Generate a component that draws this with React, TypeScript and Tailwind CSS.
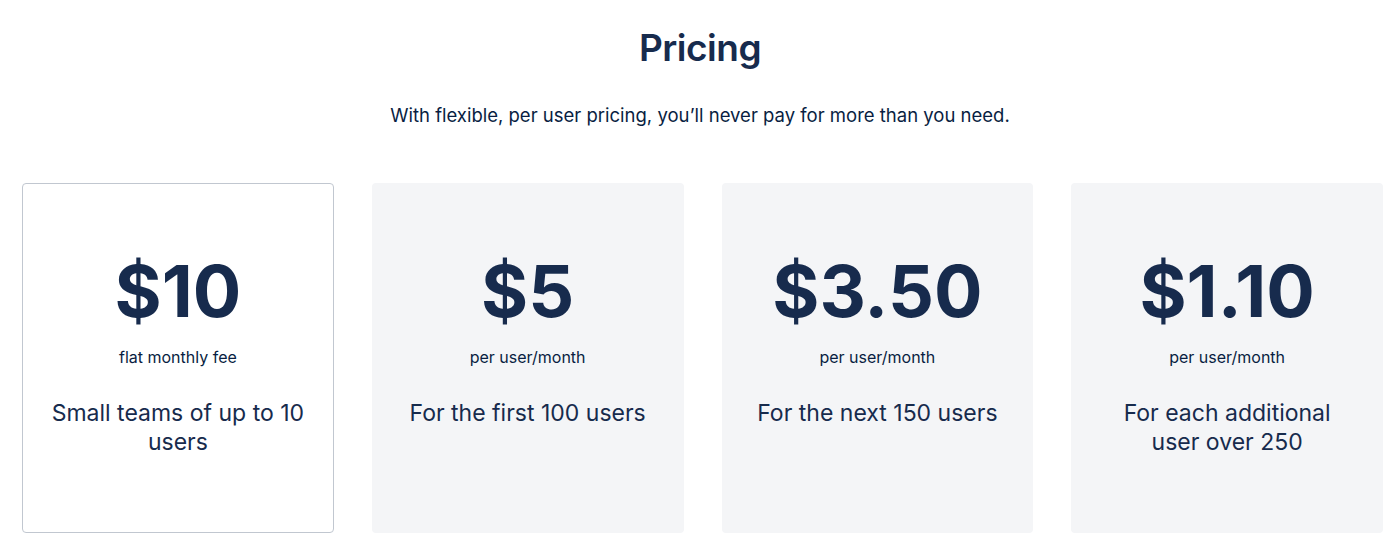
const tiers = [
  { price: '$10', unit: 'flat monthly fee', note: 'Small teams of up to 10 users', featured: true },
  { price: '$5', unit: 'per user/month', note: 'For the first 100 users', featured: false },
  { price: '$3.50', unit: 'per user/month', note: 'For the next 150 users', featured: false },
  { price: '$1.10', unit: 'per user/month', note: 'For each additional user over 250', featured: false },
];

export default function App() {
  return (
    <div
      className="w-[1400px] h-[554px] bg-white overflow-hidden"
      style={{ fontFamily: 'Inter, "Noto Sans", sans-serif' }}
    >
      <h1 className="pt-[22px] text-center text-[37px] leading-[52px] font-semibold tracking-[-0.5px] text-[#172b4d]">
        Pricing
      </h1>
      <p className="mt-[29px] text-center text-[18.5px] leading-[24px] text-[#091e42]">
        With flexible, per user pricing, you’ll never pay for more than you need.
      </p>

      <div className="mt-[56px] pl-[22px] pr-[17px] grid grid-cols-4 gap-[38px]">
        {tiers.map((tier) => (
          <div
            key={tier.price}
            className={
              tier.featured
                ? 'h-[350px] rounded-[4px] border border-[#c1c7d0] bg-white flex flex-col items-center px-4 pt-[69px]'
                : 'h-[350px] rounded-[4px] bg-[#f4f5f7] flex flex-col items-center px-4 pt-[70px]'
            }
          >
            <div className="text-[72px] leading-[76px] font-bold tracking-[0px] text-[#172b4d]">
              {tier.price}
            </div>
            <div className="mt-[18px] text-[16px] leading-[20px] text-[#091e42]">
              {tier.unit}
            </div>
            <div className="mt-[32px] max-w-[258px] text-center text-[23px] leading-[29px] text-[#172b4d]">
              {tier.note}
            </div>
          </div>
        ))}
      </div>
    </div>
  );
}
